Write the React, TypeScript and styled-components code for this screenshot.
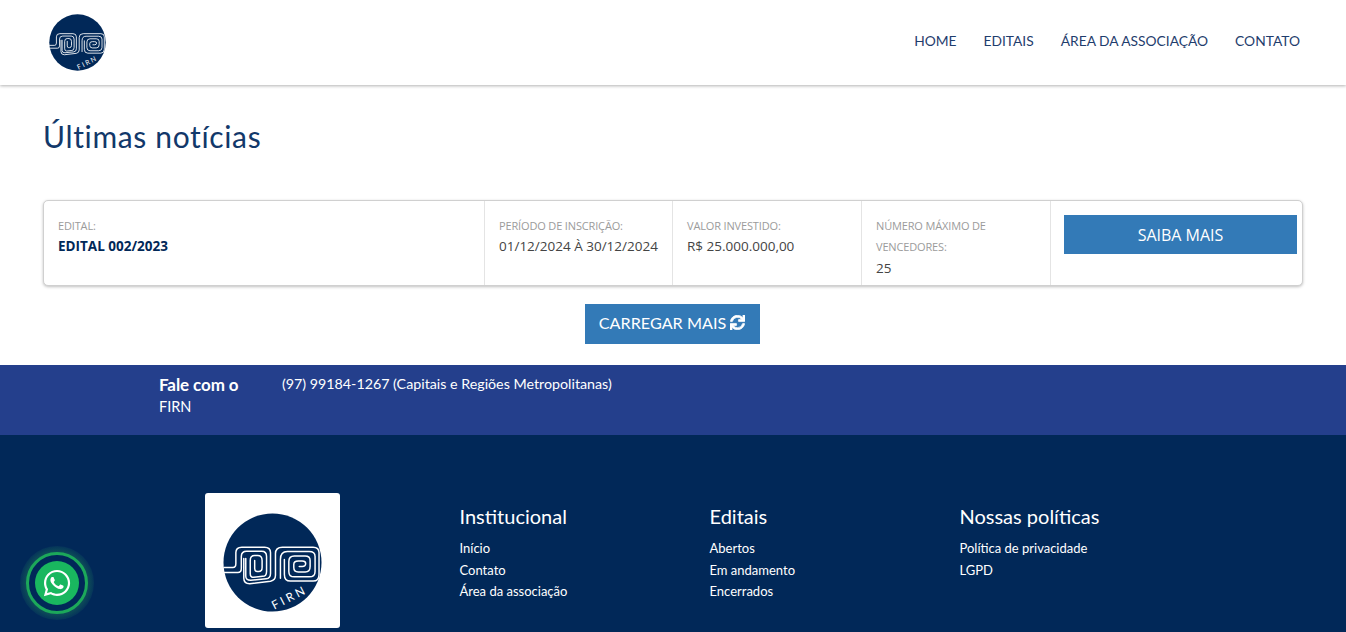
import React from "react";
import styled, { createGlobalStyle } from "styled-components";
import { FaSync, FaWhatsapp } from "react-icons/fa";

const Global = createGlobalStyle`
  html, body { margin: 0; padding: 0; background: #fff; overflow: hidden; }
  * { box-sizing: border-box; }
`;
const Page = styled.div`
  width: 1346px;
  height: 632px;
  overflow: hidden;
  position: relative;
  font-family: "Open Sans", "Liberation Sans", sans-serif;
`;
const Header = styled.header`
  height: 85px;
  display: flex;
  align-items: flex-start;
  justify-content: space-between;
  padding: 14px 46px 0 49px;
  background: #fff;
  box-shadow: 0 1px 3px rgba(0, 0, 0, 0.3);
  position: relative;
`;
const HeaderLogo = styled.svg`
  width: 57px;
  height: 57px;
  display: block;
`;
const Nav = styled.nav`
  display: flex;
  gap: 27px;
  padding-top: 18px;
`;
const NavLink = styled.a`
  font-family: "Lato", "Open Sans", sans-serif;
  font-size: 13.8px;
  line-height: 17px;
  color: #1f3d6d;
  white-space: nowrap;
`;
const Main = styled.main`
  height: 280px;
  padding: 32px 43px 0;
`;
const Title = styled.h1`
  margin: 0 0 44px;
  height: 39px;
  font-family: "Lato", "Open Sans", sans-serif;
  font-weight: 400;
  font-size: 30px;
  line-height: 39px;
  letter-spacing: 0.65px;
  color: #12386a;
`;
const Card = styled.section`
  height: 86px;
  display: grid;
  grid-template-columns: 440px 188px 189px 189px 1fr;
  border: 1px solid #d0d0d0;
  border-radius: 5px;
  box-shadow: 0 1px 3px rgba(0, 0, 0, 0.25);
  background: #fff;
`;
const Cell = styled.div`
  padding: 14px 14px 0;
  border-left: 1px solid #e4e4e4;
  &:first-child { border-left: 0; }
`;
const ActionCell = styled(Cell)`
  padding: 14px 5px 0 13px;
`;
const Label = styled.div`
  font-size: 11px;
  line-height: 21px;
  color: #9b9b9b;
  letter-spacing: -0.15px;
`;
const Value = styled.div<{ $bold?: boolean; $stacked?: boolean }>`
  font-size: 13.5px;
  line-height: 21px;
  margin-top: ${(p) => (p.$stacked ? 1 : 0)}px;
  font-weight: ${(p) => (p.$bold ? 700 : 400)};
  color: ${(p) => (p.$bold ? "#012858" : "#444")};
  white-space: nowrap;
`;
const SaibaButton = styled.button`
  width: 100%;
  height: 39px;
  border: 0;
  padding: 0;
  background: #337ab7;
  color: #fff;
  font-family: "Open Sans", sans-serif;
  font-size: 16px;
  cursor: pointer;
`;
const LoadRow = styled.div`
  display: flex;
  justify-content: center;
  padding: 18px 2px 0 0;
`;
const LoadButton = styled.button`
  width: 175px;
  height: 40px;
  border: 0;
  padding: 0 0 3px;
  background: #337ab7;
  color: #fff;
  font-family: "Lato", sans-serif;
  font-size: 16.2px;
  display: flex;
  align-items: center;
  justify-content: center;
  gap: 4px;
  cursor: pointer;
`;
const ContactBand = styled.div`
  height: 70px;
  background: #243f8c;
  color: #fff;
  display: flex;
  gap: 42px;
  padding: 8px 0 0 159px;
  font-family: "Lato", sans-serif;
`;
const ContactTitle = styled.div`
  font-size: 17px;
  line-height: 23px;
  width: 81px;
  white-space: nowrap;
  strong { font-weight: 700; letter-spacing: -0.1px; }
  span { display: block; font-size: 14.5px; margin-top: -1px; }
`;
const Phone = styled.div`
  font-size: 14.25px;
  line-height: 20px;
  padding-top: 1px;
  white-space: nowrap;
`;
const Footer = styled.footer`
  height: 197px;
  background: #012858;
  color: #fff;
  padding: 58px 0 0 205px;
  display: flex;
  font-family: "Lato", sans-serif;
`;
const LogoBox = styled.div`
  width: 135px;
  height: 135px;
  background: #fff;
  border-radius: 3px;
  display: flex;
  align-items: center;
  justify-content: center;
  margin-right: 119.5px;
  padding-top: 4px;
`;
const FooterLogo = styled.svg`
  width: 99px;
  height: 99px;
  display: block;
`;
const FooterCol = styled.div`
  width: 250px;
  padding-top: 9px;
`;
const ColTitle = styled.h3`
  margin: 0 0 8px;
  font-weight: 400;
  font-size: 20px;
  line-height: 28px;
`;
const ColLink = styled.a`
  display: block;
  font-size: 13px;
  line-height: 21.5px;
  color: #fff;
  white-space: nowrap;
`;
const WhatsRing = styled.div`
  position: absolute;
  left: 20px;
  top: 546px;
  width: 74px;
  height: 74px;
  border-radius: 50%;
  background: radial-gradient(closest-side, #0d4a58 85%, #05345a 100%);
  display: flex;
  align-items: center;
  justify-content: center;
`;
const WhatsMiddle = styled.div`
  width: 62px;
  height: 62px;
  border-radius: 50%;
  background: #012858;
  border: 3px solid #1ca85a;
  display: flex;
  align-items: center;
  justify-content: center;
`;
const WhatsButton = styled.a`
  width: 44px;
  height: 44px;
  border-radius: 50%;
  background: #19b75f;
  color: #fff;
  display: flex;
  align-items: center;
  justify-content: center;
`;

const Logo = () => (
  <>
    <circle cx="50" cy="50" r="49.5" fill="#012858" />
    <g fill="none" stroke="#fff" strokeWidth="1.5" strokeLinejoin="round" strokeLinecap="round">
      <path d="M1 55 H10 Q13 55 13 51 V40 Q13 34.5 19 34.5 H42 Q48 34.5 48 40 V61 Q48 66 43.5 66.5 L28 68 Q23 68 23 64 V46" />
      <path d="M1 60 H15 Q18.5 60 18.5 56 V44 Q18.5 38.7 24 38.7 H39 Q44 38.7 44 44 V59 Q44 64 40 64 L31 65 Q27.5 65 27.5 61 V48 Q27.5 43 32 43 H35 Q39.5 43 39.5 48 V55 Q39.5 59 36 59 H34.5 Q32 59 32 56 V48" />
      <path d="M62 47 V62 Q62 68.7 68 68.7 H91 Q97 68.7 97 62 V40 Q97 34.5 91 34.5 H60 Q53 34.5 53 41 V63 Q53 68 48 69 L27 71.5 Q21 71.5 21 66 V46" />
      <path d="M58 66 V47 Q58 39 65 39 H87 Q93 39 93 44 V59 Q93 64.5 87 64.5 H72 Q66.5 64.5 66.5 59 V49 Q66.5 43.5 72 43.5 H83 Q88 43.5 88 48 V54 Q88 59.5 83 59.5 H76 Q71.5 59.5 71.5 55 V52 Q71.5 48.5 76 48.5 H80 Q83.5 48.5 83.5 51 Q83.5 54 80 54 H77" />
    </g>
    <text
      x="69"
      y="89"
      fill="#fff"
      fontFamily="Lato, sans-serif"
      fontSize="12"
      letterSpacing="3"
      textAnchor="middle"
      transform="rotate(-27 69 89)"
    >
      FIRN
    </text>
  </>
);

export default function App() {
  return (
    <Page>
      <Global />
      <Header>
        <HeaderLogo viewBox="0 0 100 100"><Logo /></HeaderLogo>
        <Nav>
          <NavLink>HOME</NavLink>
          <NavLink>EDITAIS</NavLink>
          <NavLink>ÁREA DA ASSOCIAÇÃO</NavLink>
          <NavLink>CONTATO</NavLink>
        </Nav>
      </Header>
      <Main>
        <Title>Últimas notícias</Title>
        <Card>
          <Cell>
            <Label>EDITAL:</Label>
            <Value $bold>EDITAL 002/2023</Value>
          </Cell>
          <Cell>
            <Label>PERÍODO DE INSCRIÇÃO:</Label>
            <Value>01/12/2024 À 30/12/2024</Value>
          </Cell>
          <Cell>
            <Label>VALOR INVESTIDO:</Label>
            <Value>R$ 25.000.000,00</Value>
          </Cell>
          <Cell>
            <Label>NÚMERO MÁXIMO DE VENCEDORES:</Label>
            <Value $stacked>25</Value>
          </Cell>
          <ActionCell>
            <SaibaButton>SAIBA MAIS</SaibaButton>
          </ActionCell>
        </Card>
        <LoadRow>
          <LoadButton>CARREGAR MAIS <FaSync size={15} stroke="currentColor" strokeWidth={24} /></LoadButton>
        </LoadRow>
      </Main>
      <ContactBand>
        <ContactTitle>
          <strong>Fale com o</strong>
          <span>FIRN</span>
        </ContactTitle>
        <Phone>(97) 99184-1267 (Capitais e Regiões Metropolitanas)</Phone>
      </ContactBand>
      <Footer>
        <LogoBox>
          <FooterLogo viewBox="0 0 100 100"><Logo /></FooterLogo>
        </LogoBox>
        <FooterCol>
          <ColTitle>Institucional</ColTitle>
          <ColLink>Início</ColLink>
          <ColLink>Contato</ColLink>
          <ColLink>Área da associação</ColLink>
        </FooterCol>
        <FooterCol>
          <ColTitle>Editais</ColTitle>
          <ColLink>Abertos</ColLink>
          <ColLink>Em andamento</ColLink>
          <ColLink>Encerrados</ColLink>
        </FooterCol>
        <FooterCol>
          <ColTitle>Nossas políticas</ColTitle>
          <ColLink>Política de privacidade</ColLink>
          <ColLink>LGPD</ColLink>
        </FooterCol>
      </Footer>
      <WhatsRing>
        <WhatsMiddle>
          <WhatsButton><FaWhatsapp size={30} /></WhatsButton>
        </WhatsMiddle>
      </WhatsRing>
    </Page>
  );
}
